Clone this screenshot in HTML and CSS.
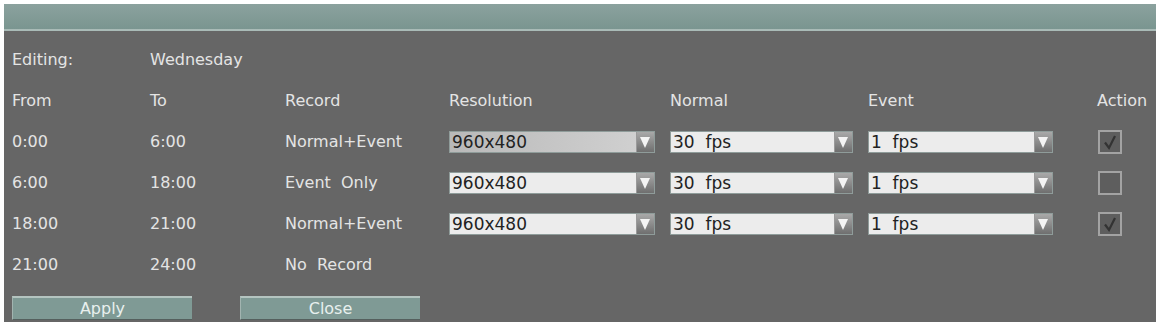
FILE: index.html
```html
<!DOCTYPE html>
<html lang="en">
  <head>
    <meta charset="UTF-8" />
    <meta name="viewport" content="width=device-width, initial-scale=1.0" />
    <title>Schedule Editing</title>
    <link rel="stylesheet" href="styles.css">
  </head>
  <body>
    <div class="panel">
      <div class="titlebar"></div>

      <div class="body">
        <div class="row">
          <span>Editing:</span>
          <span>Wednesday</span>
        </div>

        <div class="row">
          <span>From</span>
          <span>To</span>
          <span>Record</span>
          <span>Resolution</span>
          <span>Normal</span>
          <span>Event</span>
          <span>Action</span>
        </div>

        <div class="row">
          <span>0:00</span>
          <span>6:00</span>
          <span>Normal+Event</span>
          <div class="select res focused"><span>960x480</span><i class="arrow"></i></div>
          <div class="select fps"><span>30  fps</span><i class="arrow"></i></div>
          <div class="select ev"><span>1  fps</span><i class="arrow"></i></div>
          <div class="check on"><svg viewBox="0 0 18 18"><path d="M4 9.5 L8 15 L14 3" /></svg></div>
        </div>

        <div class="row">
          <span>6:00</span>
          <span>18:00</span>
          <span>Event  Only</span>
          <div class="select res"><span>960x480</span><i class="arrow"></i></div>
          <div class="select fps"><span>30  fps</span><i class="arrow"></i></div>
          <div class="select ev"><span>1  fps</span><i class="arrow"></i></div>
          <div class="check"></div>
        </div>

        <div class="row">
          <span>18:00</span>
          <span>21:00</span>
          <span>Normal+Event</span>
          <div class="select res"><span>960x480</span><i class="arrow"></i></div>
          <div class="select fps"><span>30  fps</span><i class="arrow"></i></div>
          <div class="select ev"><span>1  fps</span><i class="arrow"></i></div>
          <div class="check on"><svg viewBox="0 0 18 18"><path d="M4 9.5 L8 15 L14 3" /></svg></div>
        </div>

        <div class="row">
          <span>21:00</span>
          <span>24:00</span>
          <span>No  Record</span>
        </div>

        <div class="buttons">
          <button>Apply</button>
          <button>Close</button>
        </div>
      </div>
    </div>
  </body>
</html>
```

FILE: styles.css
```css
:root {
  --teal: #7f9a95;
  --teal-light: #a9bbb7;
  --body: #666666;
  --text: #e4e4e4;
}

body {
  margin: 0;
  background-color: #ffffff;
  font-family: 'DejaVu Sans', Verdana, sans-serif;
}

.panel {
  width: 1152px;
  height: 318px;
  margin: 4px 0 0 4px;
  background-color: var(--body);
  display: flex;
  flex-direction: column;
}

.titlebar {
  height: 25px;
  background: linear-gradient(#8ba29e, #7a9590);
  border-bottom: 2px solid var(--teal-light);
}

.body {
  padding: 8px 0 0 8px;
  color: var(--text);
  font-size: 16px;
}

.row {
  display: grid;
  grid-template-columns: 138px 135px 164px 221px 198px 229px 1fr;
  align-items: center;
  height: 41px;
  white-space: pre;
}

.select {
  height: 22px;
  background-color: #ececec;
  border: 1px solid #8f9c9a;
  box-sizing: border-box;
  display: flex;
  align-items: center;
  justify-content: space-between;
  color: #222;
  font-size: 17px;
}

.select span {
  padding-left: 2px;
}

.select.res {
  width: 206px;
}

.select.fps {
  width: 183px;
}

.select.ev {
  width: 185px;
}

.select.focused {
  background: linear-gradient(to right, #b9b9b9, #d2d2d2);
}

.arrow {
  width: 17px;
  height: 20px;
  background: linear-gradient(#a9a9a9, #6f6f6f);
  border-left: 1px solid #9a9a9a;
  position: relative;
}

.arrow::after {
  content: '';
  position: absolute;
  left: 3px;
  top: 5px;
  border-left: 5px solid transparent;
  border-right: 5px solid transparent;
  border-top: 11px solid #f4f4f4;
}

.check {
  width: 24px;
  height: 24px;
  margin-left: 1px;
  box-sizing: border-box;
  border: 2px solid #a3a3a3;
  background-color: #5e5e5e;
  padding: 1px;
}

.check svg {
  display: block;
  width: 18px;
  height: 18px;
}

.check path {
  fill: none;
  stroke: #333333;
  stroke-width: 2.2;
}

.buttons {
  display: flex;
  gap: 48px;
  margin-top: 11px;
}

button {
  width: 180px;
  height: 24px;
  padding: 0;
  background-color: var(--teal);
  border: none;
  border-top: 2px solid #b4c4c0;
  border-left: 1px solid #a2b4b0;
  border-bottom: 1px solid #55605e;
  color: #e8f0ee;
  font-family: 'DejaVu Sans', Verdana, sans-serif;
  font-size: 16px;
}
```
